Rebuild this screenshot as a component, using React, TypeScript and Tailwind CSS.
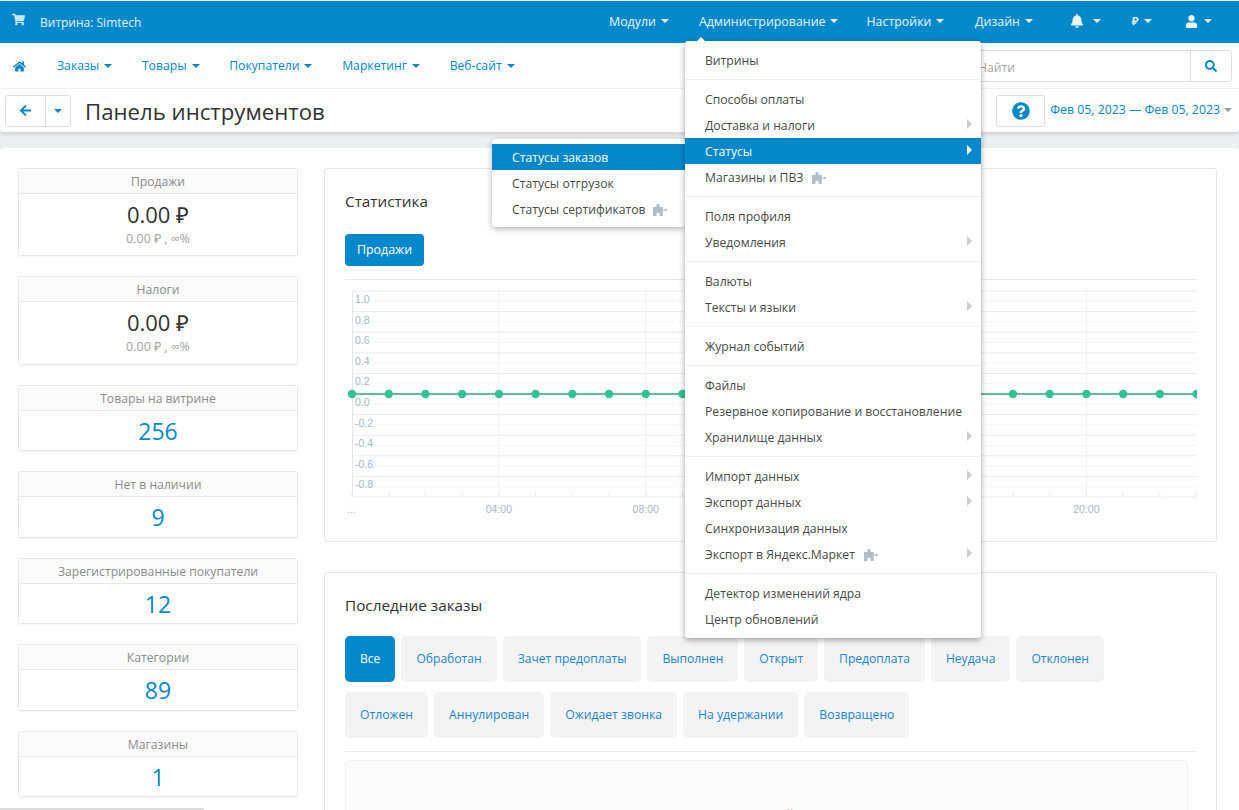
import { FaShoppingCart, FaHome, FaArrowLeft, FaSearch, FaBell, FaUser, FaQuestionCircle } from "react-icons/fa";

const Caret = ({ className = "" }: { className?: string }) => (
  <span className={"inline-block w-0 h-0 border-x-[4.5px] border-x-transparent border-t-[4.5px] " + className} />
);

const Puzzle = ({ className = "" }: { className?: string }) => (
  <svg viewBox="0 0 14 12" className={"w-[14px] h-[12px] fill-[#b3bdc8] " + className}>
    <path d="M0 3h3.400V1.500C3.400.5 3.900 0 5 0s1.600.5 1.600 1.500V3h3.200v2.400h1.500c.4-.4.900-.6 1.400-.6.800 0 1.300.5 1.300 1.200s-.5 1.200-1.300 1.200c-.5 0-1-.2-1.400-.6H9.800V12H6.700V9.700c0-.7-.7-1-1.600-1s-1.600.3-1.600 1V12H0z" />
  </svg>
);

const topItems = [
  { t: "Модули", cls: "ml-[609px]" },
  { t: "Администрирование", cls: "ml-[30px]" },
  { t: "Настройки", cls: "ml-[28px]" },
  { t: "Дизайн", cls: "ml-[30.500px]" },
];

const nav = ["Заказы", "Товары", "Покупатели", "Маркетинг", "Веб-сайт"];

const stats = [
  { title: "Продажи", value: "0.00 ₽", sub: "0.00 ₽ , ∞%", blue: false },
  { title: "Налоги", value: "0.00 ₽", sub: "0.00 ₽ , ∞%", blue: false },
  { title: "Товары на витрине", value: "256", blue: true },
  { title: "Нет в наличии", value: "9", blue: true },
  { title: "Зарегистрированные покупатели", value: "12", blue: true },
  { title: "Категории", value: "89", blue: true },
  { title: "Магазины", value: "1", blue: true },
];

const row1 = ["Все", "Обработан", "Зачет предоплаты", "Выполнен", "Открыт", "Предоплата", "Неудача", "Отклонен"];
const row2 = ["Отложен", "Аннулирован", "Ожидает звонка", "На удержании", "Возвращено"];

type MI = { t: string; sub?: boolean; puzzle?: boolean; on?: boolean };
const adminMenu: MI[][] = [
  [{ t: "Витрины" }],
  [
    { t: "Способы оплаты" },
    { t: "Доставка и налоги", sub: true },
    { t: "Статусы", sub: true, on: true },
    { t: "Магазины и ПВЗ", puzzle: true },
  ],
  [{ t: "Поля профиля" }, { t: "Уведомления", sub: true }],
  [{ t: "Валюты" }, { t: "Тексты и языки", sub: true }],
  [{ t: "Журнал событий" }],
  [{ t: "Файлы" }, { t: "Резервное копирование и восстановление" }, { t: "Хранилище данных", sub: true }],
  [
    { t: "Импорт данных", sub: true },
    { t: "Экспорт данных", sub: true },
    { t: "Синхронизация данных" },
    { t: "Экспорт в Яндекс.Маркет", puzzle: true, sub: true },
  ],
  [{ t: "Детектор изменений ядра" }, { t: "Центр обновлений" }],
];

const Chart = () => {
  const majors = Array.from({ length: 11 }, (_, i) => 291 + i * 20.6);
  const labels = ["1.0", "0.8", "0.6", "0.4", "0.2", "0.0", "-0.2", "-0.4", "-0.6", "-0.8"];
  const pts = Array.from({ length: 24 }, (_, i) => 352 + i * 36.72);
  return (
    <svg viewBox="345 285 852 240" className="w-[852px] h-[240px] block" style={{ fontFamily: "'Liberation Sans', sans-serif" }}>
      {majors.map((y, i) => (
        <g key={i}>
          <line x1="352" x2="1197" y1={y} y2={y} stroke="#e8ebef" strokeWidth="1" />
          {i < 10 && <line x1="352" x2="1197" y1={y + 10.3} y2={y + 10.3} stroke="#f4f6f8" strokeWidth="1" />}
        </g>
      ))}
      <line x1="352.500" x2="352.500" y1="291" y2="497" stroke="#e3e6ea" />
      {[4, 8, 12, 16, 20].map((h) => (
        <line key={h} x1={352 + h * 36.72} x2={352 + h * 36.72} y1="291" y2="497" stroke="#eff3f6" />
      ))}
      {pts.map((x, i) => (
        <line key={i} x1={x} x2={x} y1="493" y2="497" stroke="#e3e6ea" />
      ))}
      {labels.map((l, i) => (
        <text key={l} x="355" y={303 + i * 20.6} fontSize="10.500" fill="#a7b6cc">{l}</text>
      ))}
      <line x1="352" x2="1197" y1="394" y2="394" stroke="#5dbd9c" strokeWidth="2" />
      {pts.map((x, i) => (
        <circle key={i} cx={x} cy="394" r="4.200" fill="#31c492" />
      ))}
      <text x="347" y="513" fontSize="10.500" fill="#a7b6cc">...</text>
      {[["04:00", 4], ["08:00", 8], ["20:00", 20]].map(([t, h]) => (
        <text key={t as string} x={352 + (h as number) * 36.72} y="513" fontSize="10.500" fill="#a7b6cc" textAnchor="middle">{t}</text>
      ))}
    </svg>
  );
};

export default function App() {
  return (
    <div className="relative w-[1239px] h-[810px] overflow-hidden bg-[#edf0f3] text-[12.200px] text-[#444]" style={{ fontFamily: "'Open Sans', sans-serif" }}>
      {/* top bar */}
      <div className="h-[42px] mt-px bg-[#0388cc] text-white flex items-center relative">
        <FaShoppingCart className="absolute left-[12px] top-[12px] text-[13px] text-[#cfe6f4]" />
        <span className="absolute left-[40px] top-[14px] leading-[16px] text-[12px] text-[#e4f2fa]">Витрина: Simtech</span>
        {topItems.map((it) => (
          <span key={it.t} className={it.cls + " flex items-center text-[12.400px] text-[#e9f5fb] leading-[18px] -mt-[1px]"}>
            {it.t}
            <Caret className="ml-[5px] border-t-[#e9f5fb] -mt-[2px]" />
          </span>
        ))}
        <FaBell className="ml-[37.500px] text-[14px] text-[#e9f5fb] -mt-[2px]" />
        <Caret className="ml-[9px] border-t-[#e9f5fb] -mt-[3px]" />
        <span className="ml-[31px] text-[#e9f5fb] text-[11px] font-semibold -mt-[2px]">₽</span>
        <Caret className="ml-[6px] border-t-[#e9f5fb] -mt-[3px]" />
        <FaUser className="ml-[33px] text-[13px] text-[#e9f5fb] -mt-[2px]" />
        <Caret className="ml-[6px] border-t-[#e9f5fb] -mt-[3px]" />
      </div>

      {/* nav row */}
      <div className="h-[45px] bg-white flex items-center border-b border-[#f1f3f5] box-content">
        <FaHome className="ml-[13px] text-[13px] text-[#0388cc] mt-[1px]" />
        {nav.map((n, i) => (
          <span key={n} className={(i === 0 ? "ml-[31px]" : "ml-[29.700px]") + " flex items-center text-[#0388cc] mt-[1px]"}>
            {n}
            <Caret className="ml-[5px] border-t-[#0388cc]" />
          </span>
        ))}
        <div className="ml-auto mr-[7px] flex h-[32px] w-[300px] border border-[#d8dfe5] rounded-[3px] mt-[1px]">
          <div className="flex-1 text-[#a6a6a6] pl-[45px] leading-[33px]">Найти</div>
          <div className="w-[41px] border-l border-[#d8dfe5] flex items-center justify-center">
            <FaSearch className="text-[#0388cc] text-[12px]" />
          </div>
        </div>
      </div>

      {/* title row */}
      <div className="h-[43px] bg-white flex items-center pl-[5px] pr-[7px] rounded-b-[4px] shadow-[0_2px_4px_rgba(0,0,0,0.15)] relative">
        <div className="flex h-[32px] w-[66px] border border-[#d8dfe5] rounded-[3px]">
          <div className="w-[40px] border-r border-[#d8dfe5] flex items-center justify-center">
            <FaArrowLeft className="text-[#0388cc] text-[13px]" />
          </div>
          <div className="flex-1 flex items-center justify-center">
            <Caret className="border-t-[#0388cc]" />
          </div>
        </div>
        <h1 className="ml-[14px] text-[22.200px] leading-[30px] text-[#333] mt-[2px]">Панель инструментов</h1>
        <div className="ml-auto h-[32px] w-[49px] border border-[#d8dfe5] rounded-[3px] flex items-center justify-center">
          <FaQuestionCircle className="text-[#0388cc] text-[18px]" />
        </div>
        <span className="ml-[5px] text-[#0388cc] text-[12.300px] -mt-[1px]">Фев 05, 2023 — Фев 05, 2023</span>
        <Caret className="ml-[4px] border-t-[#999] -mt-[2px]" />
      </div>

      {/* content */}
      <div className="mt-[16px] h-[700px] bg-white rounded-t-[4px] pt-[20px] pl-[18px] pr-[22px] flex gap-[26px]">
        <aside className="w-[280px] flex flex-col gap-[20px] shrink-0 -mt-[0.3px]">
          {stats.map((s) => (
            <div key={s.title} className="border border-[#e3e7ee] rounded-[3px] shadow-[0_1px_1px_rgba(0,0,0,0.04)]">
              <div className="h-[25px] bg-[#fbfbfc] border-b border-[#e3e7ee] text-center leading-[25px] text-[#8c8c8c]">{s.title}</div>
              {s.blue ? (
                <div className="h-[39.500px] text-center text-[#0388cc] text-[23px] leading-[40px]">{s.value}</div>
              ) : (
                <div className="h-[61.500px] text-center">
                  <div className="text-[22px] leading-[30px] pt-[5px] text-[#333] h-[36px]">{s.value}</div>
                  <div className="text-[12.500px] leading-[18px] text-[#a3a3a3]">{s.sub}</div>
                </div>
              )}
            </div>
          ))}
        </aside>
        <main className="w-[893px] shrink-0 flex flex-col gap-[30px]">
          <section className="h-[374px] shrink-0 border border-[#e3e7ee] rounded-[3px] px-[20px] pt-[20px]">
            <h2 className="text-[15.300px] leading-[24px] text-[#333] font-medium">Статистика</h2>
            <button className="mt-[21px] h-[32px] w-[79px] rounded-[4px] bg-[#0388cc] text-white text-[12.400px] block">Продажи</button>
            <div className="mt-[13px] border-t border-[#e3e7ee] h-[1px] w-[851px]" />
            <div className="mt-[5px]"><Chart /></div>
          </section>
          <section className="h-[300px] shrink-0 border border-[#e3e7ee] rounded-[3px] px-[20px] pt-[20px]">
            <h2 className="text-[15.300px] leading-[24px] text-[#333] font-medium">Последние заказы</h2>
            <div className="mt-[19px] flex gap-[6px] text-[12.100px]">
              {row1.map((b, i) => (
                <span key={b} className={"h-[46px] px-[15px] rounded-[5px] leading-[46px] " + (i === 0 ? "bg-[#0388cc] text-white" : "bg-[#f3f3f3] text-[#1a87cf]")}>{b}</span>
              ))}
            </div>
            <div className="mt-[10px] flex gap-[6px] text-[12.200px]">
              {row2.map((b) => (
                <span key={b} className="h-[46px] px-[15px] rounded-[5px] leading-[46px] bg-[#f3f3f3] text-[#1a87cf]">{b}</span>
              ))}
            </div>
            <div className="mt-[13px] border-t border-[#e9ecef] w-[851px]" />
            <div className="mt-[8px] w-[843px] h-[120px] bg-[#fcfcfc] border border-[#f1f1f1] rounded-[5px] text-center pt-[45px] text-[#888]">Заказы не найдены</div>
          </section>
        </main>
      </div>

      {/* admin menu */}
      <div className="absolute left-[685px] top-[41px] w-[296px] bg-white rounded-[3px] shadow-[0_2px_6px_rgba(0,0,0,0.35)] py-[6px] z-20">
        {adminMenu.map((g, i) => (
          <div key={i} className={i > 0 ? "border-t border-[#eceef0] mt-[6px] pt-[6px]" : ""}>
            {g.map((m) => (
              <div key={m.t} className={"h-[26px] pl-[20px] pt-[2px] relative flex items-center " + (m.on ? "bg-[#0388cc] text-white" : "text-[#4a4a4a]")}>
                {m.t}
                {m.puzzle && <Puzzle className="ml-[9px]" />}
                {m.sub && (
                  <span className={"absolute right-[9px] top-[7px] w-0 h-0 border-y-[5px] border-y-transparent border-l-[5px] " + (m.on ? "border-l-white" : "border-l-[#ccc]")} />
                )}
              </div>
            ))}
          </div>
        ))}
      </div>
      <span className="absolute left-[697px] top-[37px] w-0 h-0 border-x-[4.500px] border-x-transparent border-b-[4px] border-b-white z-20" />

      {/* sub menu */}
      <div className="absolute left-[492px] top-[139px] w-[193px] h-[88px] bg-white rounded-[4px] shadow-[0_2px_6px_rgba(0,0,0,0.3)] py-[5px] z-10">
        <div className="h-[26px] pl-[20px] pt-[2px] flex items-center bg-[#0388cc] text-white">Статусы заказов</div>
        <div className="h-[26px] pl-[20px] pt-[2px] flex items-center text-[#4a4a4a]">Статусы отгрузок</div>
        <div className="h-[26px] pl-[20px] pt-[2px] flex items-center text-[#4a4a4a]">Статусы сертификатов<Puzzle className="ml-[7px]" /></div>
      </div>

      {/* horizontal scrollbar */}
      <div className="absolute left-0 bottom-0 w-[204px] h-[2px] bg-[#dcdcdc] rounded-r-[2px] z-30" />
    </div>
  );
}
